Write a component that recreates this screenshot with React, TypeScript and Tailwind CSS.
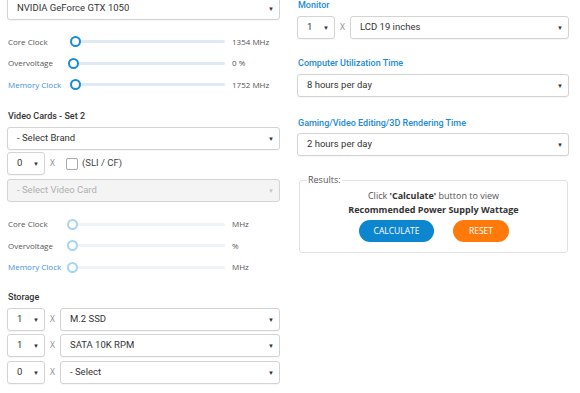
import React from "react";

const roboto = "font-['Roboto',_'Liberation_Sans',_sans-serif]";
const openSans = "font-['Open_Sans',_'Liberation_Sans',_sans-serif]";

function Caret({ light }: { light?: boolean }) {
  return (
    <span className={`text-[6px] leading-none ${light ? "text-[#c4c4c4]" : "text-[#333]"}`}>
      ▼
    </span>
  );
}

function Select({
  value,
  className = "",
  disabled,
}: {
  value: string;
  className?: string;
  disabled?: boolean;
}) {
  return (
    <div
      className={`flex h-[23px] items-center justify-between rounded-[3px] border border-[#d3d3d3] pl-[9px] pr-[5px] text-[9.5px] ${roboto} ${
        disabled ? "bg-[#f4f4f4] text-[#b0b0b0]" : "bg-white text-[#333] shadow-[0_1px_1px_rgba(0,0,0,0.04)]"
      } ${className}`}
    >
      <span>{value}</span>
      <Caret light={disabled} />
    </div>
  );
}

function Times() {
  return (
    <span className={`flex w-[15px] justify-center text-[8.5px] text-[#8a8a8a] ${openSans}`}>X</span>
  );
}

function Slider({
  label,
  value,
  thumb,
  fill,
  active,
  blueLabel,
}: {
  label: string;
  value: string;
  thumb: string;
  fill: string;
  active?: boolean;
  blueLabel?: boolean;
}) {
  return (
    <div className={`flex h-[21.5px] items-center pl-[1px] text-[8px] ${openSans}`}>
      <span className={`w-[60px] ${blueLabel ? "text-[#3f8fd6]" : "text-[#555]"}`}>{label}</span>
      <div className="relative h-[12px] w-[157px]">
        <div
          className={`absolute left-[5px] right-0 top-[4.5px] h-[3px] rounded-full ${
            active ? "bg-[#dfeaf4]" : "bg-[#eef3f8]"
          }`}
        />
        <div className={`absolute left-[5px] top-[4.5px] h-[3px] rounded-full bg-[#1a8cd8] ${fill}`} />
        <div
          className={`absolute top-[0.5px] h-[11px] w-[11px] rounded-full border-2 bg-white ${
            active ? "border-[#1a8cd8]" : "border-[#a6d4f2]"
          } ${thumb}`}
        />
      </div>
      <span className="ml-[7px] text-[#555]">{value}</span>
    </div>
  );
}

function Heading({ children, blue, className = "" }: { children: React.ReactNode; blue?: boolean; className?: string }) {
  return (
    <div
      className={`h-[12px] pl-[1px] text-[9px] font-medium leading-[12px] ${roboto} ${
        blue ? "text-[#1c8ad4]" : "text-[#333]"
      } ${className}`}
    >
      {children}
    </div>
  );
}

function CountRow({ count, item, disabled }: { count: string; item: string; disabled?: boolean }) {
  return (
    <div className="flex items-center">
      <Select value={count} className="w-[38px]" />
      <Times />
      <Select value={item} className="flex-1" disabled={disabled} />
    </div>
  );
}

export default function App() {
  return (
    <div className="flex h-[393px] w-[580px] overflow-hidden bg-white">
      <div className="ml-[7px] flex w-[273px] flex-col">
        <Select value="NVIDIA GeForce GTX 1050" className="-mt-[3px]" />
        <div className="mt-[11px]">
          <Slider label="Core Clock" value="1354 MHz" thumb="left-[1.5px]" fill="w-[4px]" active />
          <Slider label="Overvoltage" value="0 %" thumb="-left-[0.5px]" fill="w-0" active />
          <Slider label="Memory Clock" value="1752 MHz" thumb="left-[1.5px]" fill="w-[4px]" active blueLabel />
        </div>

        <Heading className="mt-[14.5px]">Video Cards - Set 2</Heading>
        <Select value="- Select Brand" className="mt-[5px]" />
        <div className="mt-[2px] flex items-center">
          <Select value="0" className="w-[38px]" />
          <Times />
          <div className="ml-[6px] h-[12px] w-[12px] rounded-[2px] border border-[#a9a9a9] bg-white" />
          <span className={`ml-[4px] text-[9.5px] text-[#444] ${roboto}`}>(SLI / CF)</span>
        </div>
        <Select value="- Select Video Card" className="mt-[4px]" disabled />
        <div className="mt-[11.25px]">
          <Slider label="Core Clock" value="MHz" thumb="-left-[1.5px]" fill="w-0" />
          <Slider label="Overvoltage" value="%" thumb="-left-[1.5px]" fill="w-0" />
          <Slider label="Memory Clock" value="MHz" thumb="-left-[1.5px]" fill="w-0" blueLabel />
        </div>

        <Heading className="mt-[13.25px]">Storage</Heading>
        <div className="mt-[5px]">
          <CountRow count="1" item="M.2 SSD" />
        </div>
        <div className="mt-[3px]">
          <CountRow count="1" item="SATA 10K RPM" />
        </div>
        <div className="mt-[4px]">
          <CountRow count="0" item="- Select" />
        </div>
      </div>

      <div className="ml-[17px] flex w-[272px] flex-col">
        <Heading blue className="-mt-[1px]">Monitor</Heading>
        <div className="mt-[5px]">
          <CountRow count="1" item="LCD 19 inches" />
        </div>

        <Heading blue className="mt-[18px]">Computer Utilization Time</Heading>
        <Select value="8 hours per day" className="mt-[5px]" />

        <Heading blue className="mt-[20px]">Gaming/Video Editing/3D Rendering Time</Heading>
        <Select value="2 hours per day" className="mt-[4px]" />

        <fieldset className="ml-[2px] mr-[1px] mt-[18px] rounded-[3px] border border-[#e2e2e2] px-2 pb-[10px] pt-[3px]">
          <legend className={`-ml-[1px] px-[1px] text-[9px] leading-[12px] text-[#555] ${openSans}`}>Results:</legend>
          <div className={`text-center text-[9px] leading-[14px] text-[#555] ${openSans}`}>
            <div>
              Click <b className="text-[#333]">'Calculate'</b> button to view
            </div>
            <div className="font-bold text-[#333]">Recommended Power Supply Wattage</div>
          </div>
          <div className="mt-[3px] flex justify-center gap-[19px] pl-[1px]">
            <button
              type="button"
              className={`h-[22px] w-[75px] rounded-full bg-[#0d86d0] text-[8.5px] text-white ${openSans}`}
            >
              CALCULATE
            </button>
            <button
              type="button"
              className={`h-[22px] w-[56px] rounded-full bg-[#ff7a0a] text-[8.5px] text-white ${openSans}`}
            >
              RESET
            </button>
          </div>
        </fieldset>
      </div>
    </div>
  );
}
